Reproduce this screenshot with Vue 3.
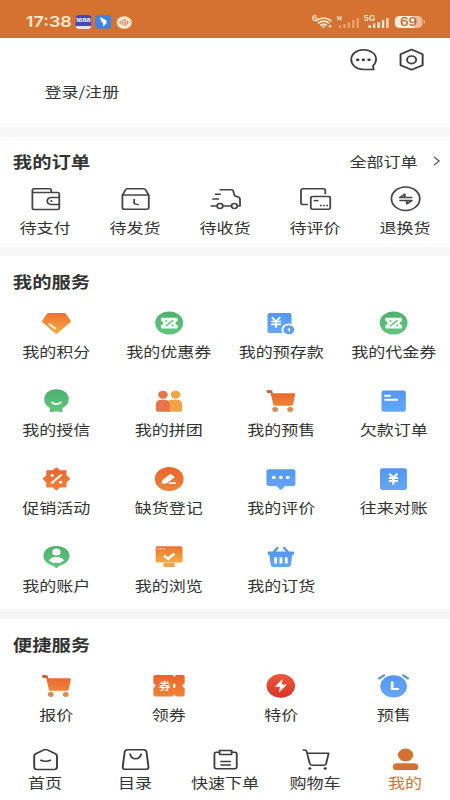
<script setup>
const orders = [
  { icon: 'wallet', label: '待支付' },
  { icon: 'box', label: '待发货' },
  { icon: 'truck', label: '待收货' },
  { icon: 'cards', label: '待评价' },
  { icon: 'swap', label: '退换货' },
]

const services = [
  { icon: 'diamond', label: '我的积分' },
  { icon: 'coupon', label: '我的优惠券' },
  { icon: 'deposit', label: '我的预存款' },
  { icon: 'coupon', label: '我的代金券' },
  { icon: 'credit', label: '我的授信' },
  { icon: 'group', label: '我的拼团' },
  { icon: 'cart-solid', label: '我的预售' },
  { icon: 'bill', label: '欠款订单' },
  { icon: 'promo', label: '促销活动' },
  { icon: 'pen', label: '缺货登记' },
  { icon: 'review', label: '我的评价' },
  { icon: 'ledger', label: '往来对账' },
  { icon: 'account', label: '我的账户' },
  { icon: 'browse', label: '我的浏览' },
  { icon: 'basket', label: '我的订货' },
]

const shortcuts = [
  { icon: 'cart-solid', label: '报价' },
  { icon: 'ticket', label: '领券', mark: '券' },
  { icon: 'bolt', label: '特价' },
  { icon: 'alarm', label: '预售' },
]

const tabs = [
  { icon: 'home', label: '首页' },
  { icon: 'bag', label: '目录' },
  { icon: 'clipboard', label: '快速下单' },
  { icon: 'cart-line', label: '购物车' },
  { icon: 'user', label: '我的', active: true },
]
</script>

<template>
  <div class="screen">
    <svg class="sprite" width="0" height="0" aria-hidden="true">
      <defs>
        <linearGradient id="g-amber" x1="0" y1="0" x2="0" y2="1">
          <stop offset="0" stop-color="#ec7233" /><stop offset="1" stop-color="#f8ac41" />
        </linearGradient>
        <linearGradient id="g-orange" x1="0" y1="0" x2="0" y2="1">
          <stop offset="0" stop-color="#e9632b" /><stop offset="1" stop-color="#ef8439" />
        </linearGradient>
        <linearGradient id="g-red" x1="0" y1="0" x2="0" y2="1">
          <stop offset="0" stop-color="#ee5a3c" /><stop offset="1" stop-color="#d93228" />
        </linearGradient>
        <linearGradient id="g-blue" x1="0" y1="0" x2="0" y2="1">
          <stop offset="0" stop-color="#5497ee" /><stop offset="1" stop-color="#64a7f8" />
        </linearGradient>
        <linearGradient id="g-green" x1="0" y1="0" x2="0" y2="1">
          <stop offset="0" stop-color="#4bb26e" /><stop offset="1" stop-color="#62c57f" />
        </linearGradient>
      </defs>

      <symbol id="chat" viewBox="0 0 24 24" overflow="visible">
        <g fill="none" stroke="#3b3b3b" stroke-width="1.5" stroke-linejoin="round">
          <path d="M12 21.4C5.7 21.4 1.7 16.8 1.7 11.5S6 1.7 12 1.7 22.4 6 22.4 11.2Q22.4 15 19.8 17.8L20.4 21.6Z" />
        </g>
        <g fill="#333"><circle cx="7.1" cy="11.8" r="1.4" /><circle cx="11.8" cy="11.8" r="1.4" /><circle cx="16.5" cy="11.8" r="1.4" /></g>
      </symbol>
      <symbol id="gear" viewBox="0 0 24 24" overflow="visible">
        <g fill="none" stroke="#3b3b3b" stroke-width="1.6" stroke-linejoin="round">
          <path d="M12 1.5 21.2 6.3V17.2L12 21.8 2.8 17.2V6.3Z" /><circle cx="12" cy="11.8" r="3.8" />
        </g>
      </symbol>

      <symbol id="wallet" viewBox="0 0 24 24" overflow="visible">
        <g fill="none" stroke="#444" stroke-width="1.5" stroke-linejoin="round">
          <path d="M1 5.4V3Q1 1.7 2.4 1.7H15.4Q16.7 1.7 16.7 3V5.4M1 5.4H22Q23.4 5.4 23.4 6.8V20.9Q23.4 22.4 22 22.4H2.5Q1 22.4 1 20.9V5.4M23.4 10.4H16.6Q13.4 10.8 13.4 14T16.6 17.4H23.4" />
        </g>
        <circle cx="16.8" cy="14" r=".9" fill="#444" />
      </symbol>
      <symbol id="box" viewBox="0 0 24 24" overflow="visible">
        <path d="M1 8.1 3.6 2.8Q4.1 1.7 5.3 1.7H18.7Q19.9 1.7 20.4 2.8L23 8.1V20.6Q23 22.3 21.3 22.3H2.7Q1 22.3 1 20.6ZM1 8.1H23M10.8 12.1V16.6L14.7 17.9" fill="none" stroke="#444" stroke-width="1.5" stroke-linejoin="round" />
      </symbol>
      <symbol id="truck" viewBox="0 0 24 24" overflow="visible">
        <g fill="none" stroke="#444" stroke-width="1.5" stroke-linejoin="round">
          <path d="M7 2.7H16.8Q18 2.7 18.3 3.8L19.5 8.7 23 10.2Q24 10.7 24 12V19H21.7M9.7 19H16.9M3.1 7.3H8M.9 12H6.5M-.5 19H4.9" />
          <ellipse cx="7.3" cy="19" rx="2.4" ry="2.4" /><ellipse cx="19.3" cy="19" rx="2.4" ry="2.4" />
        </g>
      </symbol>
      <symbol id="cards" viewBox="0 0 24 24" overflow="visible">
        <g fill="none" stroke="#444" stroke-width="1.5" stroke-linejoin="round">
          <path d="M5.6 17.6H1.6Q-.2 17.6-.2 15.8V3.5Q-.2 1.8 1.6 1.8H18.4Q20.1 1.8 20.1 3.5V7.2" />
          <rect x="8" y="9.6" width="16.2" height="12.6" rx="1.6" /><path d="M10.4 13.6H14.4" />
          <path d="M15.6 18.5H22.4" stroke-width="1.5" stroke-dasharray="1.5 1.1" />
        </g>
      </symbol>
      <symbol id="swap" viewBox="0 0 24 24" overflow="visible">
        <g fill="none" stroke="#444" stroke-width="1.5" stroke-linejoin="round">
          <circle cx="12" cy="11.7" r="11.8" /><path d="M17.5 10.5H7.1L11.3 7.3V10.4M6.8 13.6H17.2L13 16.8V13.7" />
        </g>
      </symbol>

      <symbol id="diamond" viewBox="0 0 24 24" overflow="visible">
        <path d="M5.8 2H18.2Q19.2 2 19.8 2.8L23.7 9.2Q24.3 10.4 23.4 11.4L13.3 22.1Q12 23.2 10.7 22.1L.6 11.4Q-.3 10.4.3 9.2L4.2 2.8Q4.8 2 5.8 2Z" fill="url(#g-amber)" />
        <path d="M6.3 13.3 10.8 17.3" stroke="#fff1d9" stroke-width="2" stroke-linecap="round" />
      </symbol>
      <symbol id="coupon" viewBox="0 0 24 24" overflow="visible">
        <circle cx="12" cy="12" r="11.6" fill="url(#g-green)" />
        <path d="M6 6.7H18.2Q19.1 6.7 19.1 7.6V9.9Q17.2 10.3 17.2 12T19.1 14.2V16.5Q19.1 17.4 18.2 17.4H6Q5.1 17.4 5.1 16.5V14.2Q6.9 13.8 6.9 12T5.1 9.9V7.6Q5.1 6.7 6 6.7Z" fill="#f4fff4" />
        <path d="M15.2 9.1 9.2 15.1" stroke="#55b674" stroke-width="1.2" /><circle cx="9.5" cy="9.9" r=".8" fill="#55b674" /><circle cx="14.9" cy="14.4" r=".8" fill="#55b674" />
      </symbol>
      <symbol id="deposit" viewBox="0 0 24 24" overflow="visible">
        <rect x=".9" y="2" width="20" height="20" rx="1.8" fill="url(#g-blue)" />
        <path d="M4.6 6.3 8 10.5 11.5 6.3M8 10.5V16.7M4 10.5H12.3M4 13.4H12.3" fill="none" stroke="#fff" stroke-width="1.7" />
        <circle cx="18.7" cy="18.7" r="6.2" fill="#fff" /><circle cx="18.7" cy="18.7" r="4.5" fill="#5b9ef2" />
        <path d="M19.6 16.4 17.4 18.7 19.6 21Z" fill="#fff" />
      </symbol>
      <symbol id="credit" viewBox="0 0 24 24" overflow="visible">
        <path d="M12 .3C18 .3 22.3 4.6 22.3 10.2Q22.3 16 17.1 18.9V23.3L12.8 22.5H11.2L6.4 23.3V18.9Q1.9 16 1.9 10.2C1.9 4.6 6 .3 12 .3Z" fill="url(#g-green)" />
        <path d="M8.3 13.4Q12 17 15.7 13.4" fill="none" stroke="#fff" stroke-width="1.7" stroke-linecap="round" />
      </symbol>
      <symbol id="group" viewBox="0 0 24 24" overflow="visible">
        <g fill="#f0a245"><circle cx="17.4" cy="5.7" r="4" /><path d="M10 22.7V16Q10 10.8 15 10.8H17.8Q22.8 10.8 22.8 16V21Q22.8 22.7 21 22.7Z" /></g>
        <g fill="#e9744b"><circle cx="6.8" cy="5.7" r="4" /><path d="M.9 21V16Q.9 10.8 5.7 10.8H7.8Q12.5 10.8 12.5 16V22.7H2.6Q.9 22.7.9 21Z" /></g>
      </symbol>
      <symbol id="cart-solid" viewBox="0 0 24 24" overflow="visible">
        <path d="M.2 1.3H3.3Q4.7 1.3 5 2.9L5.3 4.3H23Q24.2 4.3 24 5.5L22.2 15.5Q22 16.8 20.8 16.8H7.2Q6 16.8 5.7 15.5L3.5 4H.7Z" fill="url(#g-orange)" />
        <path d="M.2 1.3H3.3Q4.7 1.3 4.9 2.5V4H.7Z" fill="#c9632f" />
        <circle cx="7.3" cy="20.5" r="2.4" fill="#dc8c4c" /><circle cx="19.8" cy="20.5" r="2.4" fill="#dc8c4c" />
      </symbol>
      <symbol id="bill" viewBox="0 0 24 24" overflow="visible">
        <rect x="1.9" y="1.4" width="20.3" height="21.4" rx="2" fill="url(#g-blue)" />
        <path d="M4.3 6.7H9.5M4.3 10.8H15.5" stroke="#fff" stroke-width="1.9" />
      </symbol>
      <symbol id="promo" viewBox="0 0 24 24" overflow="visible">
        <path d="M12 .7 15.3 3.6H20.1V8.2L23.4 11.8 20.1 15.6V20.1H15.3L12 23.2 8.7 20.1H3.9V15.6L.6 11.8 3.9 8.2V3.6H8.7Z" fill="url(#g-orange)" stroke="#ea7034" stroke-width=".6" stroke-linejoin="round" />
        <path d="M15.8 8.1 8.2 15.9" stroke="#fff" stroke-width="2" stroke-linecap="round" /><circle cx="8.5" cy="8.5" r="1.4" fill="#fff" /><circle cx="15.5" cy="15.2" r="1.4" fill="#fff" />
      </symbol>
      <symbol id="pen" viewBox="0 0 24 24" overflow="visible">
        <circle cx="12" cy="12" r="12" fill="url(#g-orange)" />
        <path d="M5.6 16.8 6.2 13.3 13.2 6.8 16.7 10.2 9.8 16.6ZM12.3 15.2H17.6V16.9H11.3Z" fill="#fff" />
      </symbol>
      <symbol id="review" viewBox="0 0 24 24" overflow="visible">
        <path d="M2 2.2H22.2Q24.2 2.2 24.2 4.2V17Q24.2 19 22.2 19H15.5L12.8 22.4Q12 23.2 11.2 22.4L8.5 19H2Q0 19 0 17V4.2Q0 2.2 2 2.2Z" fill="url(#g-blue)" />
        <g fill="#fff"><circle cx="6.2" cy="10.4" r="1.6" /><circle cx="12" cy="10.4" r="1.6" /><circle cx="17.8" cy="10.4" r="1.6" /></g>
      </symbol>
      <symbol id="ledger" viewBox="0 0 24 24" overflow="visible">
        <rect x=".7" y="1.2" width="22.4" height="21.7" rx="2" fill="url(#g-blue)" />
        <path d="M8.4 6.6 11.8 10.6 15.2 6.6M11.8 10.6V17.7M8 11H15.7M8 14H15.7" fill="none" stroke="#fff" stroke-width="1.8" />
      </symbol>
      <symbol id="account" viewBox="0 0 24 24" overflow="visible">
        <path d="M12 .9C18.3.9 22.9 5.2 22.9 10.7 22.9 16 19 19.4 14.9 20.5L12 23.2 9.1 20.5C5 19.4 1.2 16 1.2 10.7 1.2 5.2 5.7.9 12 .9Z" fill="url(#g-green)" />
        <circle cx="12" cy="7.1" r="3.5" fill="#fff" /><path d="M5.7 15.4Q7 11.9 12 11.9T18.3 15.4Q16 18.1 12 18.1T5.7 15.4Z" fill="#fff" />
      </symbol>
      <symbol id="browse" viewBox="0 0 24 24" overflow="visible">
        <rect x=".7" y="1.3" width="22.4" height="16.3" rx="1.5" fill="url(#g-amber)" /><rect x="7.3" y="17.8" width="9.3" height="4.2" fill="#eba557" />
        <path d="M2.3 3.9H8.8" stroke="#ffe6c6" stroke-width="1.3" stroke-dasharray="1.4 1" /><path d="M7.8 10.7 11.2 13.8 16.3 8.7" fill="none" stroke="#fff" stroke-width="2.4" />
      </symbol>
      <symbol id="basket" viewBox="0 0 24 24" overflow="visible">
        <path d="M6.1 7.2 9.2 2.8M17.9 7.2 14.8 2.8" stroke="#5397e4" stroke-width="2" stroke-linecap="round" />
        <path d="M2 6.5H22Q23 6.5 23 7.6V8.8Q23 9.9 21.6 9.9L20.4 19.9Q20.1 21.9 18.3 21.9H5.7Q3.9 21.9 3.6 19.9L2.4 9.9Q1 9.9 1 8.8V7.6Q1 6.5 2 6.5Z" fill="url(#g-blue)" />
        <path d="M7.7 12.2V18.4M12.1 12.2V18.4M16.5 12.2V18.4" stroke="#fff" stroke-width="2.3" />
      </symbol>
      <symbol id="ticket" viewBox="0 0 24 24" overflow="visible">
        <path d="M.3 1H14.8L16.2 3 17.6 1H23.3Q24.9 1 24.9 2.6V9.6Q23 10.2 23 11.8T24.9 14V20.8Q24.9 22.4 23.3 22.4H17.6L16.2 20.4 14.8 22.4H.3Q-1.2 22.4-1.2 20.8V14Q.6 13.4.6 11.8T-1.2 9.6V2.6Q-1.2 1 .3 1Z" fill="url(#g-orange)" />
        <path d="M16.2 9.6V14" stroke="#fff" stroke-width="1.8" />
      </symbol>
      <symbol id="bolt" viewBox="0 0 24 24" overflow="visible">
        <circle cx="12" cy="11.8" r="11.9" fill="url(#g-red)" /><path d="M13.4 4.9 6.9 12.8H11.2L10.6 18.6 17.1 10.6H12.8Z" fill="#fff" />
      </symbol>
      <symbol id="alarm" viewBox="0 0 24 24" overflow="visible">
        <circle cx="12" cy="12.3" r="11.1" fill="url(#g-blue)" /><path d="M0 4.3 4 1.4M20 1.4 24 4.3" stroke="#5b97dc" stroke-width="2.1" stroke-linecap="round" />
        <path d="M10.8 7.6V15H16.5" fill="none" stroke="#fff" stroke-width="2.2" />
      </symbol>

      <symbol id="home" viewBox="0 0 24 24" overflow="visible">
        <path d="M3.9 6.8 10.6 2.9Q12 2.1 13.4 2.9L20.1 6.8Q21.5 7.6 21.5 9.2V20Q21.5 22.5 19 22.5H5Q2.5 22.5 2.5 20V9.2Q2.5 7.6 3.9 6.8ZM7.6 13Q12 15.6 16.4 13" fill="none" stroke="#3c3c3c" stroke-width="1.6" />
      </symbol>
      <symbol id="bag" viewBox="0 0 24 24" overflow="visible">
        <path d="M5.4 2.7H18.6Q20.8 2.7 21.1 5L22.7 19.7Q22.9 22.3 20.5 22.3H3.5Q1.1 22.3 1.3 19.7L2.9 5Q3.2 2.7 5.4 2.7ZM7.3 6.6Q8.1 11.7 12 11.7T16.7 6.6" fill="none" stroke="#3c3c3c" stroke-width="1.6" />
      </symbol>
      <symbol id="clipboard" viewBox="0 0 24 24" overflow="visible">
        <path d="M7 5.2H4.4Q2.7 5.2 2.7 6.9V20Q2.7 21.7 4.4 21.7H19.6Q21.3 21.7 21.3 20V6.9Q21.3 5.2 19.6 5.2H17M7 3.5H17V7.5H7ZM7.6 14.4H16.4M7.6 17.9H16.4" fill="none" stroke="#3c3c3c" stroke-width="1.5" stroke-linejoin="round" />
      </symbol>
      <symbol id="cart-line" viewBox="0 0 24 24" overflow="visible">
        <path d="M1.2 3H2.9Q4.2 3 4.5 4.3L7.1 16.4Q7.5 18.2 9.1 18.2H19Q20.5 18.2 20.8 16.7L22.9 6.2H5" fill="none" stroke="#3c3c3c" stroke-width="1.5" stroke-linejoin="round" />
        <circle cx="7.2" cy="21.5" r="1.3" fill="#3c3c3c" /><circle cx="20" cy="21.5" r="1.3" fill="#3c3c3c" />
      </symbol>
      <symbol id="user" viewBox="0 0 24 24" overflow="visible">
        <circle cx="12" cy="8" r="6.4" fill="#d57231" /><path d="M4.8 16.3H19.2Q22.6 16.3 22.6 20.6 22.6 23 21 23H3Q1.4 23 1.4 20.6 1.4 16.3 4.8 16.3Z" fill="#d57231" />
      </symbol>
    </svg>

    <header class="status">
      <span class="time">17:38</span>
      <div class="apps">
        <span class="app-1688"><b>1688</b></span>
        <svg class="app-bird" viewBox="0 0 14 14">
          <rect width="14" height="14" rx="3.2" fill="#3d82e6" /><path d="M4.2 2.2Q8 3.8 10.7 6.8L9.4 7.3 10 8.5 7 12V9.2Q4.6 7 4.2 2.2Z" fill="#fff" />
        </svg>
        <svg class="app-audio" viewBox="0 0 13 13">
          <circle cx="6.5" cy="6.5" r="6.3" fill="#ffe9ce" /><path d="M2 5.9V7.1M3.8 4.8V8.2M5.5 3.6V9.4M7.3 2.8V10.2M9.1 4.6V8.4M10.9 5.8V7.2" stroke="#c88350" stroke-width=".9" />
        </svg>
      </div>
      <div class="signals">
        <svg class="wifi" viewBox="0 0 17 14">
          <text x="0" y="6" font-size="7" font-weight="700" fill="#ffe5cb" font-family="Inter, sans-serif">6</text>
          <g fill="none" stroke="#ffe5cb" stroke-width="1.6"><path d="M2.9 6.1Q9.6-.1 16.3 6.1M4.9 8.4Q9.6 4 14.3 8.4M6.9 10.6Q9.6 8.2 12.3 10.6" /></g>
          <circle cx="9.6" cy="12.1" r="1.1" fill="#ffe5cb" /><circle cx="15" cy="11.3" r="1.2" fill="#ffe5cb" />
        </svg>
        <svg class="bars" viewBox="0 0 21 14">
          <path d="M1 1.5 4.7 5.1M4.7 1.5 1 5.1" stroke="#ffe5cb" stroke-width="1.3" />
          <path d="M3.3 13V10.6M7 13V9M10.7 13V7.2M14.4 13V5.1M18.1 13V3" stroke="#e8a574" stroke-width="1.9" />
        </svg>
        <svg class="bars" viewBox="0 0 21 14">
          <text x="0" y="6" font-size="7" font-weight="700" fill="#ffe5cb" font-family="Inter, sans-serif">5G</text>
          <path d="M5.1 13V10M8.8 13V8.5M12.5 13V7M16.2 13V5.1M19.9 13V3" stroke="#ffe5cb" stroke-width="2" />
        </svg>
        <span class="battery">69</span><i class="nub"></i>
      </div>
    </header>

    <section class="profile">
      <div class="tools">
        <svg class="icon"><use href="#chat" /></svg>
        <svg class="icon"><use href="#gear" /></svg>
      </div>
      <p class="login">登录/注册</p>
    </section>

    <section class="card orders">
      <div class="head">
        <h2>我的订单</h2>
        <span class="all">全部订单
          <svg class="chevron" viewBox="0 0 6 10"><path d="M.6.8 5 5 .6 9.2" fill="none" stroke="#555" stroke-width="1.1" /></svg>
        </span>
      </div>
      <div class="row five">
        <div v-for="o in orders" :key="o.label" class="item">
          <svg class="icon"><use :href="'#' + o.icon" /></svg><span>{{ o.label }}</span>
        </div>
      </div>
    </section>

    <section class="card services">
      <h2>我的服务</h2>
      <div class="row four">
        <div v-for="s in services" :key="s.label" class="item">
          <svg class="icon"><use :href="'#' + s.icon" /></svg><span>{{ s.label }}</span>
        </div>
      </div>
    </section>

    <section class="card shortcuts">
      <h2>便捷服务</h2>
      <div class="row four">
        <div v-for="s in shortcuts" :key="s.label" class="item">
          <svg class="icon">
            <use :href="'#' + s.icon" />
            <text v-if="s.mark" class="mark" x="8.2" y="15.6" text-anchor="middle">{{ s.mark }}</text>
          </svg>
          <span>{{ s.label }}</span>
        </div>
      </div>
    </section>

    <nav class="tabs">
      <div v-for="t in tabs" :key="t.label" class="tab" :class="{ active: t.active }">
        <svg class="icon"><use :href="'#' + t.icon" /></svg><span>{{ t.label }}</span>
      </div>
    </nav>
  </div>
</template>

<style>
body {
  margin: 0;
  overflow: hidden;
  background: #f6f6f6;
}
</style>

<style scoped>
.screen {
  display: flex;
  flex-direction: column;
  width: 375px;
  height: 800px;
  overflow: hidden;
  transform: scaleX(1.2);
  transform-origin: 0 0;
  background: #f6f6f6;
  color: #333;
  font-family: "Noto Sans CJK SC", sans-serif;
  font-size: 14.2px;
  line-height: 20px;
}
.sprite { position: absolute; }
.icon { display: block; flex: none; width: 24px; height: 24px; overflow: visible; }
.mark { fill: #fff; font-size: 10px; font-weight: 700; }

.status {
  display: flex;
  flex: none;
  align-items: center;
  box-sizing: border-box;
  height: 38px;
  padding: 6px 21px 0 21.5px;
  background: #d57231;
}
.time {
  width: 41px;
  color: #ffe8cf;
  font: 600 15px/18px Inter, sans-serif;
}
.apps { display: flex; align-items: center; gap: 3.3px; }
.app-1688 {
  display: flex;
  justify-content: center;
  box-sizing: border-box;
  width: 13.5px;
  height: 14px;
  padding-top: 2px;
  border-bottom: 3px solid #e9e2f4;
  border-radius: 3px;
  background: #4347b5;
}
.app-1688 b { color: #fff; font: 700 5.4px/6px Inter, sans-serif; }
.app-bird { width: 14px; height: 13.5px; }
.app-audio { width: 13px; height: 13px; }
.signals { display: flex; align-items: center; margin-left: auto; }
.wifi { width: 17px; height: 14px; margin-right: 3.5px; }
.bars { width: 21px; height: 14px; margin-right: 1.5px; }
.battery {
  width: 23.4px;
  height: 12.5px;
  margin-left: 3.5px;
  border-radius: 4px;
  background: linear-gradient(90deg, #ffecd7 70%, #f2bd98 70%);
  color: #bd6a36;
  text-align: center;
  font: 500 11.5px/12.5px Inter, sans-serif;
}
.nub { width: 1.2px; height: 4px; margin-left: 0.6px; border-radius: 0 1px 1px 0; background: #f2bd98; }

.profile { flex: none; height: 89px; background: #fff; }
.tools { display: flex; justify-content: flex-end; gap: 15.6px; padding: 10px 20.5px 0 0; }
.login { margin: 9px 0 0 37px; }

.card { flex: none; box-sizing: border-box; background: #fff; }
h2 { margin: 0 0 0 10.7px; font-size: 16.1px; font-weight: 700; line-height: 24px; }
.orders { height: 110px; margin-top: 10px; padding-top: 12px; }
.head { display: flex; align-items: center; justify-content: space-between; }
.all { display: flex; align-items: center; padding-right: 8px; }
.chevron { width: 6px; height: 10px; margin-left: 13px; }
.row { display: grid; }
.five { grid-template-columns: repeat(5, 1fr); margin-top: 14px; }
.four { grid-template-columns: repeat(4, 1fr); grid-auto-rows: 78px; margin-top: 18px; }
.item, .tab { display: flex; flex-direction: column; align-items: center; white-space: nowrap; }
.item span { margin-top: 6px; }
.services { height: 353px; margin-top: 9px; padding-top: 13px; }
.shortcuts { height: 121px; margin-top: 10px; padding-top: 13px; }
.tabs {
  display: grid;
  flex: 1;
  grid-template-columns: repeat(5, 1fr);
  padding-top: 7px;
  background: #fff;
}
.tab span { margin-top: 1px; }
.active { color: #d57231; }
</style>
